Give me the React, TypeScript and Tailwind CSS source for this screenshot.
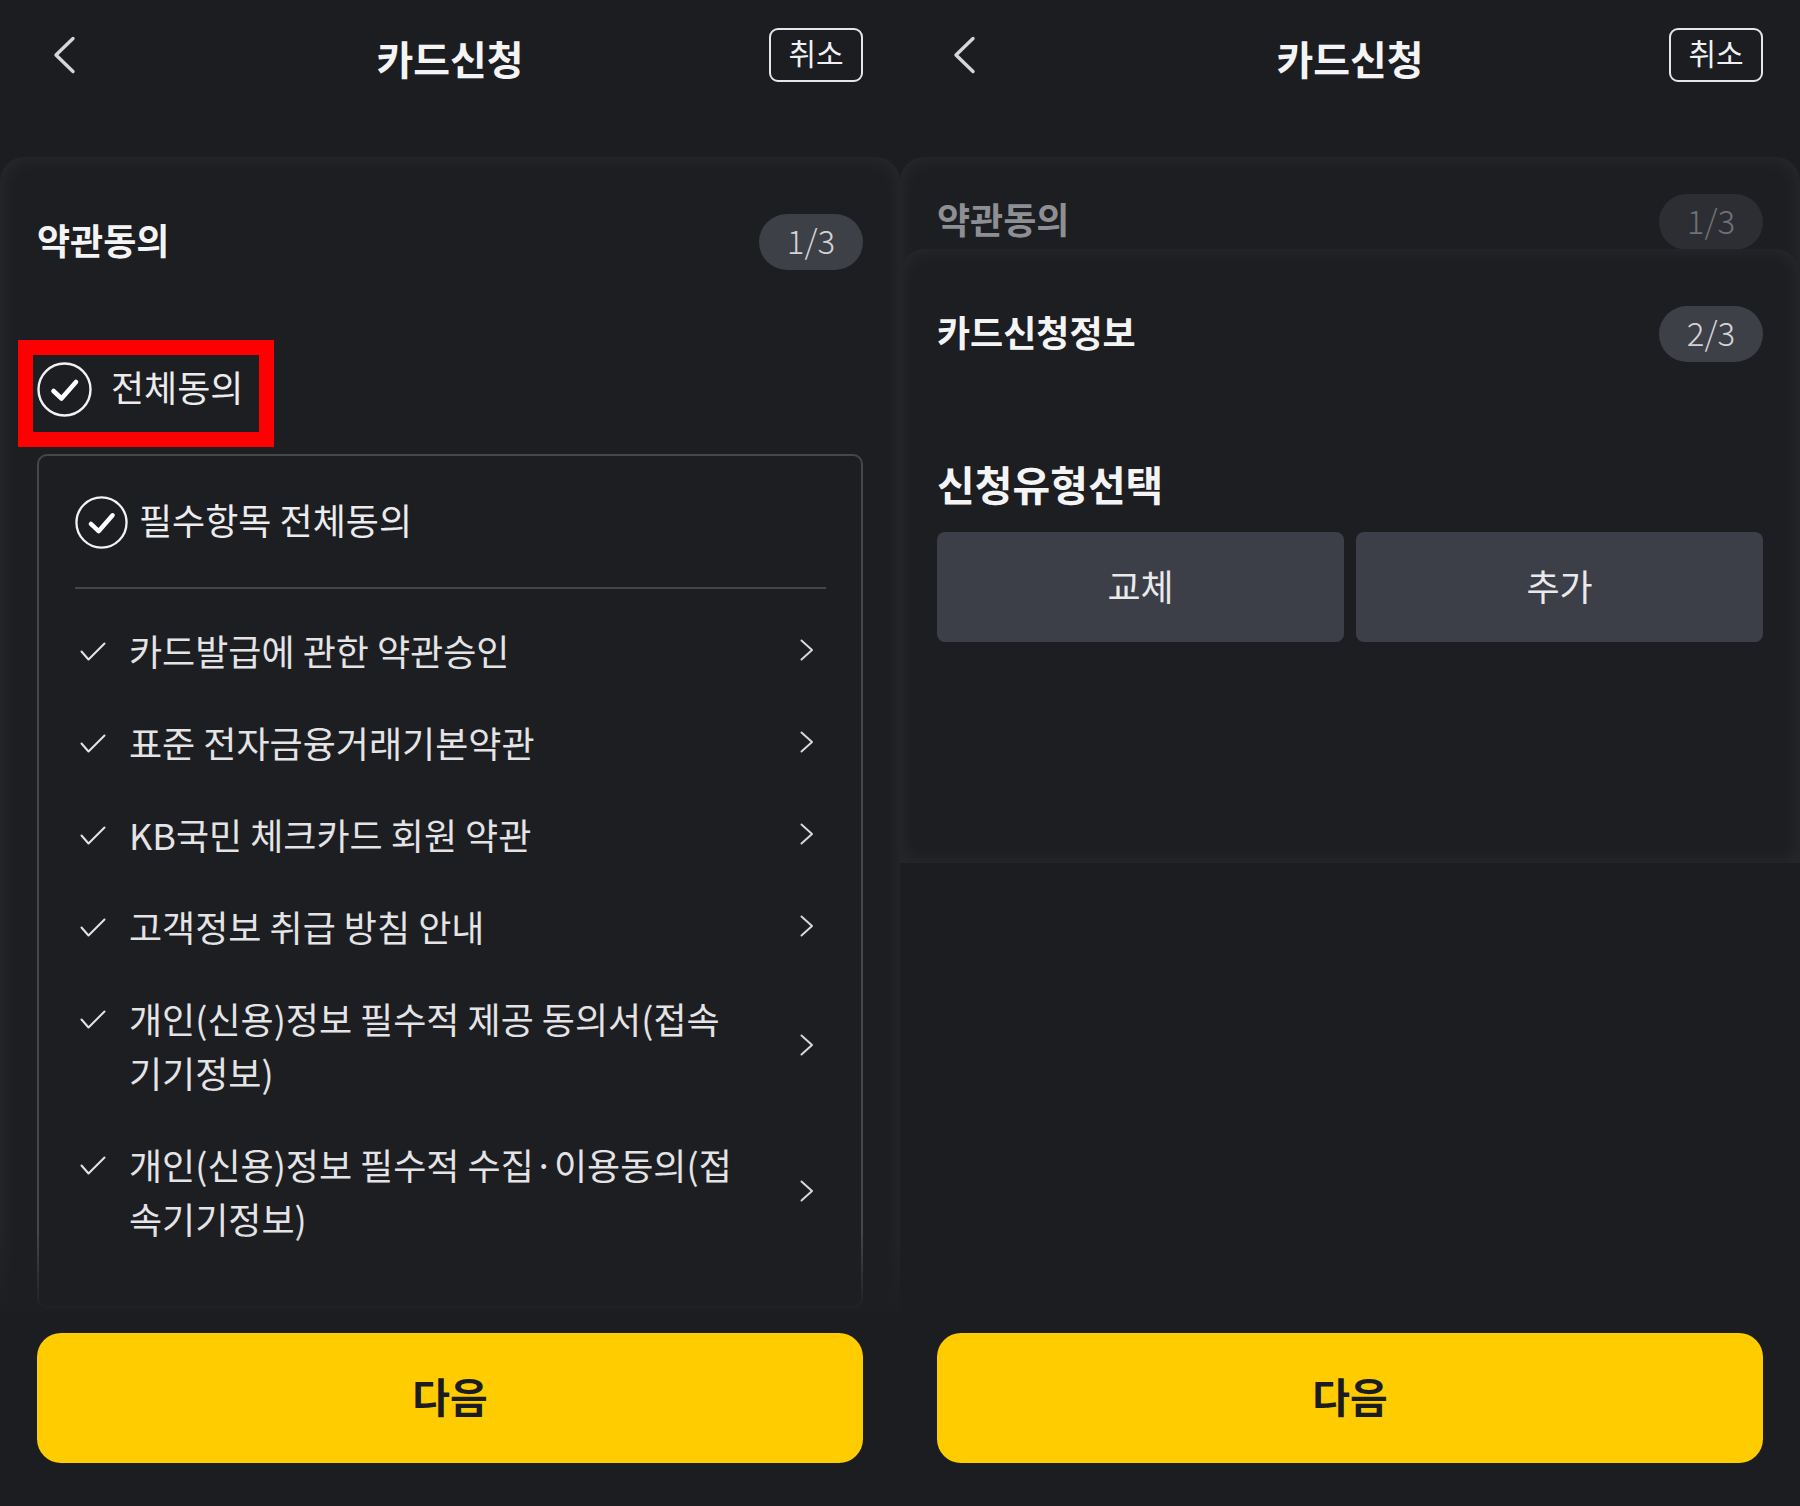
import React from "react";

const terms = [
    ["카드발급에 관한 약관승인"],
    ["표준 전자금융거래기본약관"],
    ["KB국민 체크카드 회원 약관"],
    ["고객정보 취급 방침 안내"],
    ["개인(신용)정보 필수적 제공 동의서(접속", "기기정보)"],
    ["개인(신용)정보 필수적 수집·이용동의(접", "속기기정보)"],
];

function CircleCheck({ size }: { size: number }) {
    return (
        <svg width={size} height={size} viewBox="0 0 55 55" fill="none" className="shrink-0">
            <circle cx="27.5" cy="27.5" r="26" stroke="#f2f2f2" strokeWidth="2.4" />
            <path
                d="M16.5 29 L24.5 36.5 L39 20"
                stroke="#ffffff"
                strokeWidth="4.6"
                strokeLinecap="round"
                strokeLinejoin="round"
            />
        </svg>
    );
}

function SmallCheck() {
    return (
        <svg width="26" height="19" viewBox="0 0 26 19" fill="none" className="shrink-0">
            <path d="M1.5 9.5 L8.5 17.5 L24.5 1.5" stroke="#e4e4e6" strokeWidth="2" strokeLinecap="round" strokeLinejoin="round" />
        </svg>
    );
}

function ChevronRight() {
    return (
        <svg width="14" height="22" viewBox="0 0 14 22" fill="none" className="shrink-0">
            <path d="M1.5 1.5 L12 11 L1.5 20.5" stroke="#d8d8da" strokeWidth="2" strokeLinecap="round" strokeLinejoin="round" />
        </svg>
    );
}

function Header() {
    return (
        <header className="h-[157px] px-[37px] pt-[28px] flex items-start justify-between">
            <div className="w-[94px] h-[54px] flex items-center pl-[15px]">
                <svg width="24" height="38" viewBox="0 0 24 38" fill="none">
                    <path d="M21 2.5 L4 19 L21 35.5" stroke="#d6d6d8" strokeWidth="3.4" strokeLinecap="round" strokeLinejoin="round" />
                </svg>
            </div>
            <h1 className="h-[54px] flex items-center pt-[5px] text-[40px] font-bold text-[#f4f4f5] leading-none">
                카드신청
            </h1>
            <button className="w-[94px] h-[54px] rounded-[9px] border-2 border-[#e6e6e8] flex items-center justify-center pb-[6px] text-[30px] leading-none text-[#f0f0f2]">
                취소
            </button>
        </header>
    );
}

function Badge({ label, dim }: { label: string; dim?: boolean }) {
    return (
        <span
            className={
                dim
                    ? "w-[104px] h-[56px] rounded-full bg-[#2c2e33] text-[#707176] text-[33px] font-light flex items-center justify-center leading-none pb-[4px]"
                    : "w-[104px] h-[56px] rounded-full bg-[#3e4047] text-[#d2d3d7] text-[33px] font-light flex items-center justify-center leading-none pb-[4px]"
            }
        >
            {label}
        </span>
    );
}

function NextButton() {
    return (
        <div className="mt-auto px-[37px] pb-[43px]">
            <button className="w-full h-[130px] rounded-[24px] bg-[#ffcc00] text-[41px] font-bold text-[#1b1c1f] flex items-center justify-center pb-[5px]">
                다음
            </button>
        </div>
    );
}

export default function App() {
    return (
        <div
            className="w-[1800px] h-[1506px] flex bg-[#1c1d21] overflow-hidden"
            style={{ fontFamily: '"Noto Sans CJK KR", "Noto Sans", sans-serif' }}
        >
            {/* 약관동의 단계 */}
            <div className="w-[900px] flex flex-col">
                <Header />
                <section className="relative h-[1155px] rounded-t-[24px] bg-[#1d1e22] shadow-[inset_0_0_22px_rgba(255,255,255,0.06)] px-[37px] overflow-hidden">
                    <div className="pt-[55px] flex items-center justify-between">
                        <h2 className="text-[36px] font-bold text-[#f4f4f5] pb-[6px]">약관동의</h2>
                        <Badge label="1/3" />
                    </div>

                    <div className="relative mt-[90px] h-[55px] flex items-center gap-[19px]">
                        <CircleCheck size={55} />
                        <span className="text-[36px] text-[#ececee] leading-none pb-[7px]">전체동의</span>
                        <div className="absolute -left-[19px] -top-[22px] w-[256px] h-[107px] border-[15px] border-[#ff0000]" />
                    </div>

                    <div className="mt-[37px] h-[854px] rounded-[10px] border-2 border-[#46474d] pl-[36px] pr-[35px] pt-[39px]">
                        <div className="h-[54px] flex items-center gap-[11px]">
                            <CircleCheck size={53} />
                            <span className="text-[36px] text-[#ececee] leading-none pb-[6px]">필수항목 전체동의</span>
                        </div>
                        <div className="mt-[38px] h-[2px] bg-[#45464c]" />
                        <ul className="mt-[34px] flex flex-col gap-[38px]">
                            {terms.map((lines, index) => (
                                <li key={index} className="flex items-center">
                                    <div className="flex items-start flex-1">
                                        <div className="h-[54px] w-[54px] pl-[5px] pt-[2px] flex items-center">
                                            <SmallCheck />
                                        </div>
                                        <p className="text-[36px] leading-[54px] text-[#e4e4e6] whitespace-nowrap">
                                            {lines.map((line, i) => (
                                                <span key={i} className="block">
                                                    {line}
                                                </span>
                                            ))}
                                        </p>
                                    </div>
                                    <div className="pr-[12px]">
                                        <ChevronRight />
                                    </div>
                                </li>
                            ))}
                        </ul>
                    </div>
                    <div className="absolute left-0 right-0 bottom-0 h-[80px] bg-linear-to-b from-transparent to-[#1d1e22]" />
                </section>
                <NextButton />
            </div>

            {/* 카드신청정보 단계 */}
            <div className="w-[900px] flex flex-col">
                <Header />
                <section className="h-[706px] rounded-t-[24px] bg-[#1d1e22] shadow-[inset_0_0_22px_rgba(255,255,255,0.06)] flex flex-col">
                    <div className="h-[92px] px-[37px] pt-[37px] flex items-start justify-between">
                        <h2 className="h-[56px] flex items-center pb-[8px] text-[36px] font-bold text-[#8e8f94]">약관동의</h2>
                        <Badge label="1/3" dim />
                    </div>
                    <div className="flex-1 rounded-t-[24px] bg-[#1d1e22] shadow-[inset_0_0_22px_rgba(255,255,255,0.06)] px-[37px]">
                        <div className="pt-[55px] flex items-center justify-between">
                            <h2 className="text-[36px] font-bold text-[#f4f4f5] pb-[6px]">카드신청정보</h2>
                            <Badge label="2/3" />
                        </div>
                        <h3 className="mt-[96px] text-[41px] font-bold text-[#f4f4f5] leading-[46px]">신청유형선택</h3>
                        <div className="mt-[26px] grid grid-cols-2 gap-[12px]">
                            <button className="h-[110px] rounded-[8px] bg-[#3c3f47] text-[36px] text-[#eaeaec] pb-[4px]">교체</button>
                            <button className="h-[110px] rounded-[8px] bg-[#3c3f47] text-[36px] text-[#eaeaec] pb-[4px]">추가</button>
                        </div>
                    </div>
                </section>
                <NextButton />
            </div>
        </div>
    );
}
